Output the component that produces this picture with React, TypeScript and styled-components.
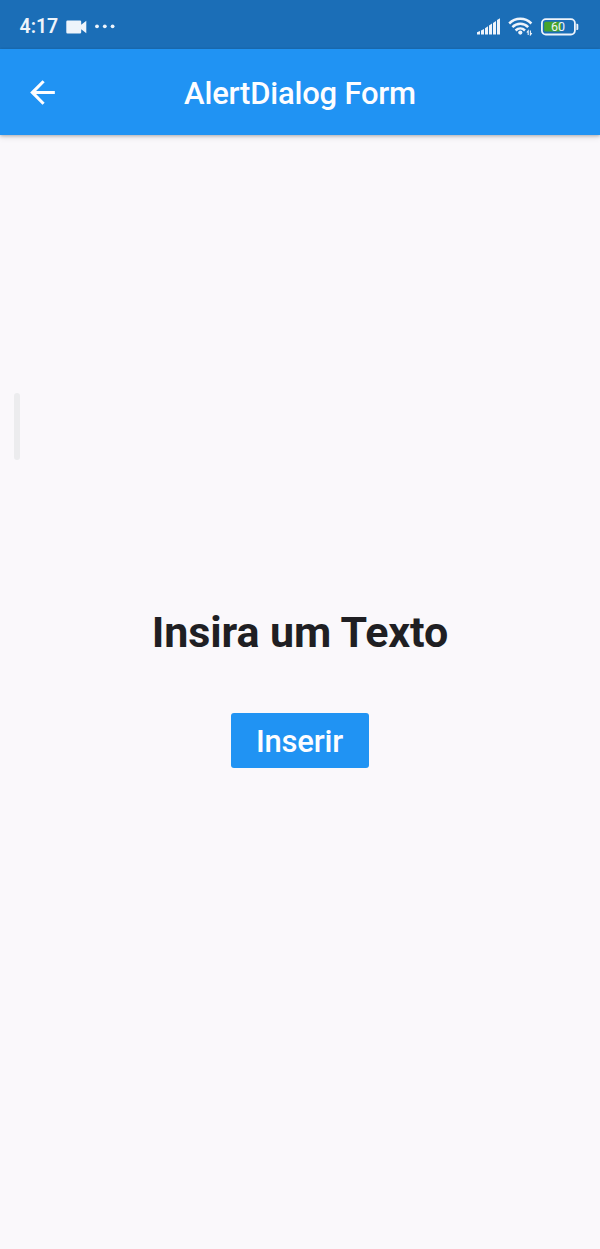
import React from "react";
import styled, { createGlobalStyle } from "styled-components";

const GlobalStyle = createGlobalStyle`
  *, *::before, *::after { box-sizing: border-box; }
  body { margin: 0; background: #faf8fb; font-family: Roboto, "Liberation Sans", sans-serif; }
`;

const Screen = styled.div`
  position: relative;
  display: flex;
  flex-direction: column;
  width: 600px;
  height: 1249px;
  background: #faf8fb;
  overflow: hidden;
`;

const StatusBar = styled.div`
  display: flex;
  align-items: center;
  justify-content: space-between;
  height: 49px;
  flex: none;
  padding: 4px 21px 0 19.5px;
  background: #1b6eb7;
  color: #eef4fb;
`;

const StatusGroup = styled.div<{ $gap: number }>`
  display: flex;
  align-items: center;
  gap: ${(p) => p.$gap}px;
`;

const Clock = styled.span`
  padding-top: 1px;
  font-size: 19.5px;
  line-height: 24px;
  font-weight: 600;
`;

const AppBar = styled.header`
  display: grid;
  grid-template-columns: 84px 1fr 84px;
  align-items: center;
  height: 86px;
  flex: none;
  background: #2093f3;
  color: #fdfdff;
  box-shadow: 0 1px 3px rgba(0, 0, 0, 0.25), 0 3px 6px rgba(0, 0, 0, 0.08);
`;

const BackButton = styled.button`
  display: flex;
  margin: 0 0 0 24px;
  padding: 0;
  border: 0;
  width: 37px;
  background: none;
  color: inherit;
`;

const Title = styled.h1`
  margin: 4px 0 0;
  font-size: 31px;
  line-height: 38px;
  font-weight: 500;
  letter-spacing: -0.2px;
  text-align: center;
  white-space: nowrap;
`;

const Body = styled.main`
  display: flex;
  flex-direction: column;
  align-items: center;
  justify-content: center;
  flex: 1;
  gap: 56px;
  padding-bottom: 10px;
`;

const Message = styled.p`
  margin: 0;
  font-size: 43px;
  line-height: 50px;
  font-weight: 700;
  letter-spacing: -0.1px;
  color: #1f1f23;
  white-space: nowrap;
`;

const InsertButton = styled.button`
  width: 138px;
  height: 55px;
  padding: 4px 1px 0 0;
  border: 0;
  border-radius: 3px;
  background: #2093f3;
  color: #fdfdff;
  font: 500 31px/38px Roboto, "Liberation Sans", sans-serif;
  letter-spacing: -0.2px;
`;

const EdgeHandle = styled.div`
  position: absolute;
  left: 14px;
  top: 393px;
  width: 6px;
  height: 67px;
  border-radius: 3px;
  background: #ececee;
`;

const CameraIcon = () => (
  <svg width="21" height="14" viewBox="0 0 21 14" fill="currentColor">
    <path d="M1.5 0.5h12.5q1.2 0 1.2 1.2v3.1L20.3 0.8v12.4L15.2 9.2v3.1q0 1.2-1.2 1.2H1.5Q.3 13.5.3 12.3V1.7Q.3.5 1.5.5z" />
  </svg>
);

const DotsIcon = () => (
  <svg width="20" height="6" viewBox="0 0 20 6" fill="currentColor">
    <circle cx="2" cy="2.3" r="1.9" />
    <circle cx="9.8" cy="2.3" r="1.9" />
    <circle cx="17.6" cy="2.3" r="1.9" />
  </svg>
);

const SignalIcon = () => (
  <svg width="23" height="17" viewBox="0 0 23 17" fill="currentColor">
    <path d="M0 14.3l3-1.2V16.5H0zM4 12.6l3-1.7V16.5H4zM8 10.2l3-2V16.5H8zM12 7.5l3-2V16.5h-3zM16 4.9l3-2V16.5h-3zM20 2.1L23 .3V16.5h-3z" />
  </svg>
);

const WifiIcon = () => (
  <svg width="25" height="19" viewBox="0 0 25 19" fill="none" stroke="currentColor">
    <g strokeWidth="2.5">
      <path d="M1.2 6.5C7.5.2 17.1.2 23.4 6.5" />
      <path d="M4.4 10.1c4.5-4.5 11.3-4.5 15.8 0" />
      <path d="M7.6 13.5c2.7-2.7 6.7-2.7 9.4 0" />
    </g>
    <circle cx="12.3" cy="15.6" r="2.1" fill="currentColor" stroke="none" />
    <path d="M20.2 18v-4.2l-1.4 1.7M22.4 13.6v4.2l1.4-1.7" strokeWidth="1.1" />
  </svg>
);

const BatteryIcon = () => (
  <svg width="38" height="18" viewBox="1 0 38 18">
    <rect x="1.9" y="1.1" width="33" height="15.4" rx="4" fill="none" stroke="#eef4fb" strokeWidth="1.8" />
    <path d="M36.4 5.8h.8q1.1 0 1.1 1.1v4q0 1.1-1.1 1.1h-.8z" fill="#eef4fb" />
    <rect x="4.2" y="3.8" width="17" height="9.8" rx="1.5" fill="#46a32c" />
    <text x="18" y="13.3" fill="#eef4fb" fontFamily="Roboto, sans-serif" fontSize="12.5" fontWeight="400" textAnchor="middle">
      60
    </text>
  </svg>
);

const BackIcon = () => (
  <svg width="37" height="37" viewBox="0 0 24 24" fill="currentColor">
    <path d="M20 11H7.83l5.59-5.59L12 4l-8 8 8 8 1.41-1.41L7.83 13H20z" />
  </svg>
);

export default function App() {
  return (
    <>
      <GlobalStyle />
      <Screen>
        <StatusBar>
          <StatusGroup $gap={8}>
            <Clock>4:17</Clock>
            <CameraIcon />
            <DotsIcon />
          </StatusGroup>
          <StatusGroup $gap={8}>
            <SignalIcon />
            <WifiIcon />
            <BatteryIcon />
          </StatusGroup>
        </StatusBar>
        <AppBar>
          <BackButton aria-label="Voltar">
            <BackIcon />
          </BackButton>
          <Title>AlertDialog Form</Title>
        </AppBar>
        <Body>
          <Message>Insira um Texto</Message>
          <InsertButton>Inserir</InsertButton>
        </Body>
        <EdgeHandle />
      </Screen>
    </>
  );
}
